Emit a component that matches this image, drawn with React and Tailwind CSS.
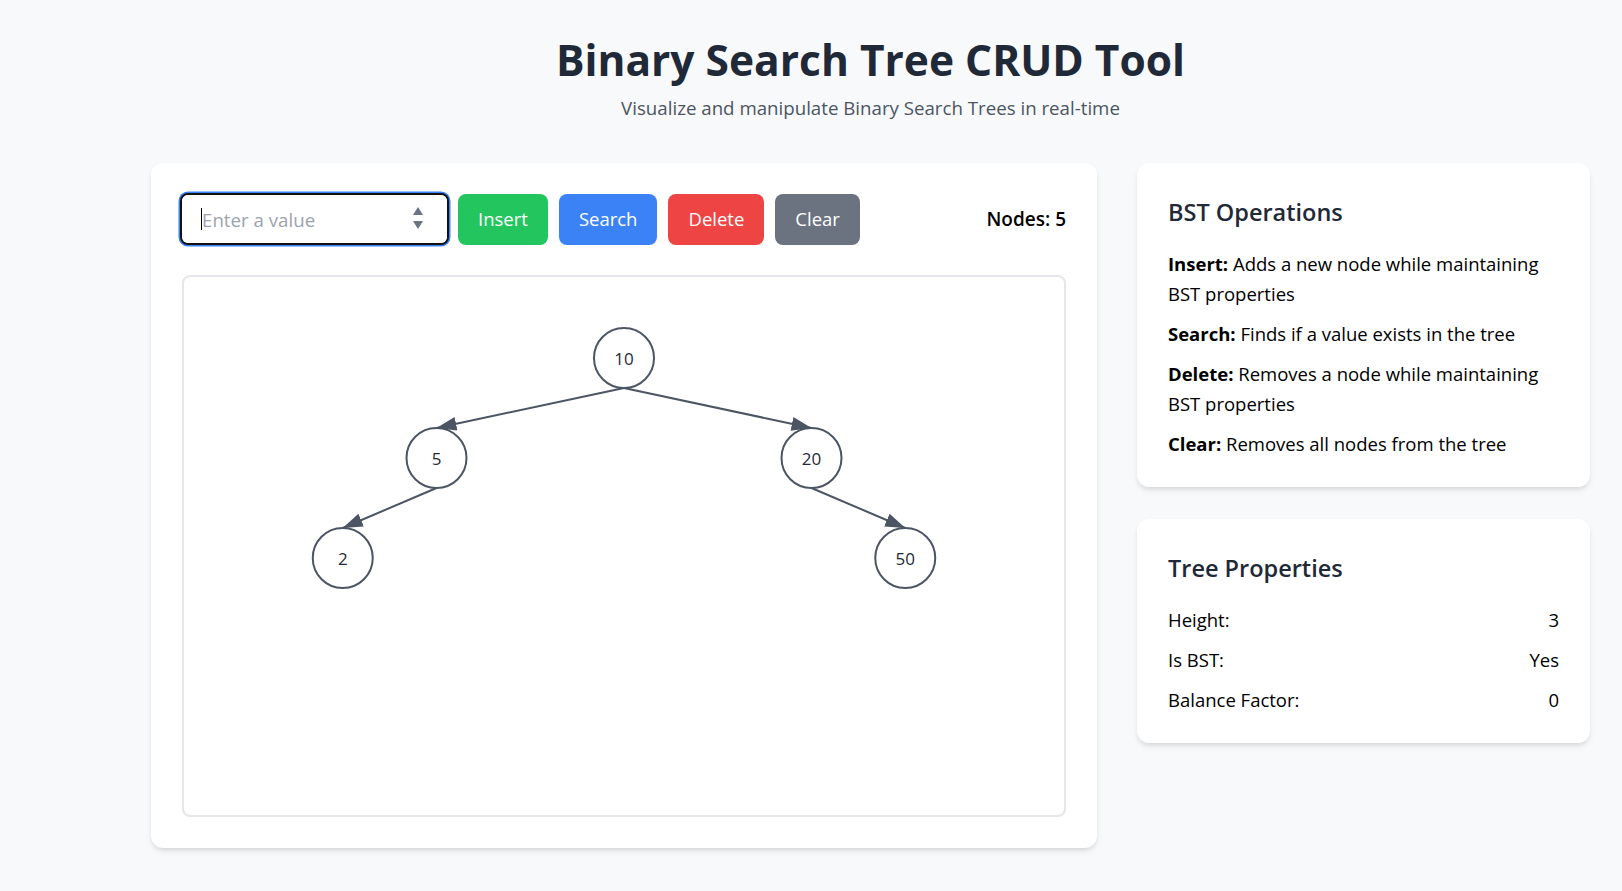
import React, { useState } from "react";

const NODES = [
  { value: 10, x: 440, y: 81 },
  { value: 5, x: 252.5, y: 181 },
  { value: 20, x: 627.5, y: 181 },
  { value: 2, x: 158.75, y: 281 },
  { value: 50, x: 721.25, y: 281 },
];

const EDGES = [
  [0, 1],
  [0, 2],
  [1, 3],
  [2, 4],
];

const R = 30;

const TreeView = () => (
  <svg width="880" height="537" className="block">
    <defs>
      <marker id="arrowhead" markerWidth="10" markerHeight="7" refX="10" refY="3.5" orient="auto">
        <polygon points="0 0, 10 3.5, 0 7" fill="#4b5563" />
      </marker>
    </defs>
    {EDGES.map(([a, b]) => (
      <line
        key={`${a}-${b}`}
        x1={NODES[a].x}
        y1={NODES[a].y + R}
        x2={NODES[b].x}
        y2={NODES[b].y - R}
        stroke="#4b5563"
        strokeWidth="2"
        markerEnd="url(#arrowhead)"
      />
    ))}
    {NODES.map((node) => (
      <g key={node.value}>
        <circle cx={node.x} cy={node.y} r={R} fill="#ffffff" stroke="#4b5563" strokeWidth="2" />
        <text
          x={node.x}
          y={node.y}
          textAnchor="middle"
          dominantBaseline="central"
          fontSize="17"
          fill="#1f2937"
          fontFamily="'Open Sans', sans-serif"
        >
          {node.value}
        </text>
      </g>
    ))}
  </svg>
);

const App = () => {
  const [value, setValue] = useState("");

  return (
    <div className="min-h-screen bg-[#f8f9fb] font-['Open_Sans',sans-serif] text-black">
      <div className="ml-[151px] w-[1439px] pt-[36px] pb-10">
        <header className="mb-[41px] text-center">
          <h1 className="text-[42.5px] font-bold leading-[48px] text-[#1f2937]">Binary Search Tree CRUD Tool</h1>
          <p className="mt-[10px] text-[18.7px] leading-7 text-[#4b5563]">
            Visualize and manipulate Binary Search Trees in real-time
          </p>
        </header>

        <div className="grid grid-cols-3 items-start gap-10">
          <section className="col-span-2 rounded-xl bg-white px-[31px] pb-[31px] pt-8 shadow-md">
            <div className="flex h-[48px] items-center gap-[11px]">
              <div className="relative h-12 w-[265px] rounded-md shadow-[0_0_0_2px_#111,0_0_0_3.5px_#3b82f6]">
                <input
                  type="text"
                  value={value}
                  onChange={(e) => setValue(e.target.value)}
                  placeholder="Enter a value"
                  className="h-full w-full rounded-md bg-white px-5 text-[18.7px] text-black outline-none placeholder:text-[#9ca3af]"
                />
                <span className="absolute left-[19px] top-[13px] h-[22px] w-px bg-black" />
                <span className="absolute right-[24px] top-[12px] flex flex-col items-center gap-[6px]">
                  <svg width="10" height="8" viewBox="0 0 10 8">
                    <polygon points="5 0, 10 8, 0 8" fill="#6b7280" />
                  </svg>
                  <svg width="10" height="8" viewBox="0 0 10 8">
                    <polygon points="0 0, 10 0, 5 8" fill="#6b7280" />
                  </svg>
                </span>
              </div>
              <button className="h-[51px] rounded-lg bg-[#22c55e] px-5 text-[18.5px] text-white">Insert</button>
              <button className="h-[51px] rounded-lg bg-[#3b82f6] px-5 text-[18.5px] text-white">Search</button>
              <button className="h-[51px] rounded-lg bg-[#ef4444] px-5 text-[18.5px] text-white">Delete</button>
              <button className="h-[51px] rounded-lg bg-[#6b7280] px-5 text-[18.5px] text-white">Clear</button>
              <span className="ml-auto text-[19px] font-semibold text-black">Nodes: 5</span>
            </div>
            <div className="mt-[32px] h-[542px] overflow-hidden rounded-lg border-2 border-[#e5e7eb]">
              <TreeView />
            </div>
          </section>

          <aside className="flex flex-col gap-8">
            <div className="rounded-xl bg-white px-[31px] pb-7 pt-8 shadow-md">
              <h2 className="mb-[19px] text-[23.5px] font-semibold leading-[35px] text-[#1f2937]">BST Operations</h2>
              <div className="flex flex-col gap-[10px] text-[18.5px] leading-[30px]">
                <p>
                  <strong className="font-bold">Insert:</strong> Adds a new node while maintaining BST properties
                </p>
                <p>
                  <strong className="font-bold">Search:</strong> Finds if a value exists in the tree
                </p>
                <p>
                  <strong className="font-bold">Delete:</strong> Removes a node while maintaining BST properties
                </p>
                <p>
                  <strong className="font-bold">Clear:</strong> Removes all nodes from the tree
                </p>
              </div>
            </div>

            <div className="rounded-xl bg-white px-[31px] pb-7 pt-8 shadow-md">
              <h2 className="mb-[19px] text-[23.5px] font-semibold leading-[35px] text-[#1f2937]">Tree Properties</h2>
              <div className="flex flex-col gap-[10px] text-[18.5px] leading-[30px]">
                <div className="flex justify-between">
                  <span>Height:</span>
                  <span>3</span>
                </div>
                <div className="flex justify-between">
                  <span>Is BST:</span>
                  <span>Yes</span>
                </div>
                <div className="flex justify-between">
                  <span>Balance Factor:</span>
                  <span>0</span>
                </div>
              </div>
            </div>
          </aside>
        </div>
      </div>
    </div>
  );
};

export default App;
